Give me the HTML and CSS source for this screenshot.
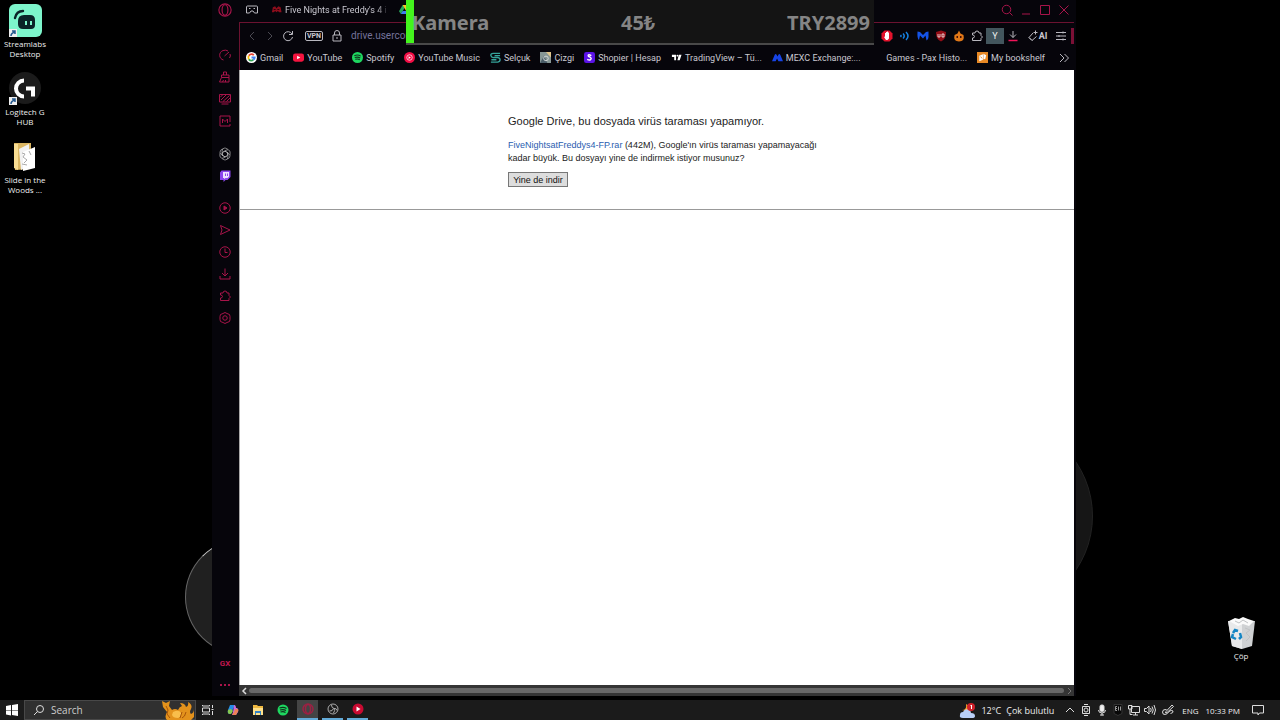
FILE: index.html
```html
<!DOCTYPE html>
<html lang="tr">
<head>
    <meta charset="UTF-8">
    <meta name="viewport" content="width=device-width, initial-scale=1.0">
    <title>Google Drive</title>
    <link rel="stylesheet" href="styles.css">
</head>
<body>
    <div class="desktop">
        <div class="planet planetLeft"></div>
        <div class="planet planetRight"></div>

        <div class="shortcuts">
            <a class="shortcut" href="#">
                <svg width="36" height="36" viewBox="0 0 36 36"><rect x="2" y="1" width="33" height="33" rx="6" fill="#7df5cb"/><path d="M8 15c1-5 4-7 8-7" fill="none" stroke="#0b2328" stroke-width="2.4" stroke-linecap="round"/><path d="M17 12h6q5 0 5 5v5q0 4-4 4h-8q-5 0-5-5v-3q0-6 6-6z" fill="#0b2328"/><path d="M19 18v4M24 18v4" stroke="#7df5cb" stroke-width="2"/><rect x="2" y="26" width="8" height="8" fill="#eee"/><path d="M4 33q0-3 4-4M5 28h3v3" fill="none" stroke="#24598f" stroke-width="1.500"/></svg>
                <span>Streamlabs Desktop</span>
            </a>
            <a class="shortcut" href="#">
                <svg width="36" height="36" viewBox="0 0 36 36"><circle cx="18" cy="17" r="16" fill="#1b1b1b"/><path d="M17 9.500a8 8 0 0 0 0 16" fill="none" stroke="#fff" stroke-width="4"/><path d="M19 17.500h7v8" fill="none" stroke="#fff" stroke-width="4"/><rect x="2" y="26" width="8" height="8" fill="#eee"/><path d="M4 33q0-3 4-4M5 28h3v3" fill="none" stroke="#24598f" stroke-width="1.500"/></svg>
                <span>Logitech G HUB</span>
            </a>
            <a class="shortcut" href="#">
                <svg width="36" height="36" viewBox="0 0 36 36"><path d="M7 4h17v26l-16 1z" fill="#dcb763"/><path d="M7 5h4v26l-4-2z" fill="#f9dd92"/><path d="M12 10l10-5v22l-8 4z" fill="#f2f2f2"/><path d="M16 13l12-5v21l-12 3z" fill="#fff"/><path d="M15 14l3 1-2 3 4 3-3 3M22 12l2 4M15 25l5 1" fill="none" stroke="#aaa"/></svg>
                <span>Slide in the Woods ...</span>
            </a>
        </div>

        <a class="shortcut recycleBin" href="#">
            <svg width="36" height="36" viewBox="0 0 36 36"><path d="M5 6h27l-3 25-10 3-10-3z" fill="#cfd1d3"/><path d="M5 6l14 3v25l-10-3z" fill="#e8e9ea"/><path d="M6 6l6-3 4 1 4-2 5 2 6 2-5 5-6-2-5 2z" fill="#fafafa"/><path d="M12 6l4 2 4-3 5 3M22 13l5 2-4 3 4 4-4 4" fill="none" stroke="#c0c2c4"/><path d="M10 18l2-3 3 1M17 18l1 4-2 2M13 24l-4-2 1-3" fill="none" stroke="#1686c4" stroke-width="2.500"/></svg>
            <span>Çöp</span>
        </a>

        <div class="window">
            <nav class="sidebar">
                <button class="sideButton logo" aria-label="Opera GX"><svg class="icon big" viewBox="0 0 24 24"><circle cx="12" cy="12" r="10.500"/><ellipse cx="12" cy="12" rx="5" ry="9"/></svg></button>
                <div class="sideGroup first">
                    <button class="sideButton" aria-label="Speed"><svg class="icon" viewBox="0 0 24 24"><path d="M9 22C0 20-2 7 8 3q6-2 10 1M22 10q2 4-1 8M11 14l9-8"/></svg></button>
                    <button class="sideButton" aria-label="Cleaner"><svg class="icon" viewBox="0 0 24 24"><path d="M9 8V2h6v6M5 8h15v5H5zM5 13L1 22h19v-9M7 22l2-4M13 22v-4"/></svg></button>
                    <button class="sideButton" aria-label="Mods"><svg class="icon" viewBox="0 0 24 24"><path d="M1 3h22v15H1zM5 22h14M4 14L14 4M8 17L21 5M15 17l7-7M3 8l4-4"/></svg></button>
                    <button class="sideButton" aria-label="Player"><svg class="icon" viewBox="0 0 24 24"><path d="M22 14V2H2v20h20v-4M7 16V8l5 5 5-5v8"/></svg></button>
                </div>
                <div class="sideGroup apps">
                    <button class="sideButton" aria-label="ChatGPT"><svg class="icon big knot" viewBox="0 0 24 24"><path d="M12 7l5 3v7q-1 6-6 5l-4-2M16.300 9.500v5l-6 4q-6 2-7-3v-5M16 15l-4 2-6-4q-5-4-1-8l4-2M12 17l-5-3V7q1-6 6-5l4 2M7.700 14.500v-5l6-4q6-2 7 3v5M8 9l4-2 6 4q5 4 1 8l-4 2"/></svg></button>
                    <button class="sideButton" aria-label="Twitch"><svg class="icon" viewBox="0 0 24 24"><path d="M5 1h18v13l-6 6h-4l-4 4v-4H2V5z" fill="#8a45ed" stroke="none"/><path d="M8 4h12v9l-3 3h-4l-3 2v-2H8z" fill="#eee3ff" stroke="none"/><path d="M13 7v5M17 7v5" stroke="#8a45ed"/></svg></button>
                </div>
                <div class="sideGroup">
                    <button class="sideButton" aria-label="Video"><svg class="icon" viewBox="0 0 24 24"><circle cx="12" cy="12" r="10.500"/><path d="M10 8l6 4-6 4z" fill="#a8144a"/></svg></button>
                    <button class="sideButton" aria-label="Flow"><svg class="icon" viewBox="0 0 24 24"><path d="M3 3l19 9-19 9 3-9z"/></svg></button>
                    <button class="sideButton" aria-label="History"><svg class="icon" viewBox="0 0 24 24"><circle cx="12" cy="12" r="10.500"/><path d="M12 5v8h5"/></svg></button>
                    <button class="sideButton" aria-label="Downloads"><svg class="icon" viewBox="0 0 24 24"><path d="M12 1v15M6 10l6 6 6-6M2 16v6h20v-6"/></svg></button>
                    <button class="sideButton" aria-label="Extensions"><svg class="icon" viewBox="0 0 24 24"><path d="M3 6h5q0-4 4-4t4 4h4v5l3 3-3 3v4H3v-5q4 0 4-3t-4-3z"/></svg></button>
                    <button class="sideButton" aria-label="Settings"><svg class="icon" viewBox="0 0 24 24"><path d="M12 1l4 2 5 2 1 4v6l-1 4-5 2-4 2-4-2-5-2-1-4V9l1-4 5-2z"/><circle cx="12" cy="12" r="4.500"/></svg></button>
                </div>
                <div class="sideGroup last">
                    <button class="sideButton gx">GX</button>
                    <button class="sideButton" aria-label="More"><svg class="icon" viewBox="0 0 24 24"><path d="M2 12h4M10 12h4M18 12h4" stroke-width="4"/></svg></button>
                </div>
            </nav>

            <div class="browser">
                <div class="tabBar">
                    <button class="tool" aria-label="Islands"><svg class="icon grey" viewBox="0 0 24 24"><path d="M3 4h18q2 0 2 2v12h-6l-3-4h-4l-3 4H1V6q0-2 2-2zM6 9h3M15 9h3"/></svg></button>
                    <div class="tab">
                        <svg class="favicon" viewBox="0 0 24 24"><path d="M2 18L4 7l5-2 3 4 4-4 5 2 2 11h-5l-3-3-3 3-3-3-3 3z" fill="#8c0d1c"/><path d="M6 12h4M14 12h4" stroke="#1c0508" stroke-width="2"/></svg>
                        <span class="tabTitle">Five Nights at Freddy's 4 i</span>
                    </div>
                    <div class="tab">
                        <svg class="favicon" viewBox="0 0 24 24"><path d="M8 2h8L8 16l-4 6-4-6z" fill="#26a65b"/><path d="M16 2l8 14h-8L8 2z" fill="#f6c026"/><path d="M8 15h16l-4 7H4z" fill="#3d7ff0"/></svg>
                    </div>
                    <div class="windowButtons">
                        <button class="tool" aria-label="Search tabs"><svg class="icon" viewBox="0 0 24 24"><circle cx="11" cy="11" r="8.500"/><path d="M17 17l6 6"/></svg></button>
                        <button class="tool" aria-label="Minimize"><svg class="icon" viewBox="0 0 24 24"><path d="M4 20h16"/></svg></button>
                        <button class="tool" aria-label="Maximize"><svg class="icon" viewBox="0 0 24 24"><path d="M3 3h18v18H3z"/></svg></button>
                        <button class="tool" aria-label="Close"><svg class="icon" viewBox="0 0 24 24"><path d="M3 3l18 18M21 3L3 21"/></svg></button>
                    </div>
                </div>

                <div class="toolBar">
                    <button class="tool" aria-label="Back"><svg class="icon dark" viewBox="0 0 24 24"><path d="M16 4l-8 8 8 8"/></svg></button>
                    <button class="tool" aria-label="Forward"><svg class="icon dark" viewBox="0 0 24 24"><path d="M8 4l8 8-8 8"/></svg></button>
                    <button class="tool" aria-label="Reload"><svg class="icon grey" viewBox="0 0 24 24"><path d="M20 8a9 9 0 1 0 1 6M21 2v7h-7"/></svg></button>
                    <button class="vpn">VPN</button>
                    <svg class="icon grey" viewBox="0 0 24 24"><path d="M4 10h16v12H4zM7 10V6q0-5 5-5t5 5v4M12 14v4"/></svg>
                    <input class="address" type="text" aria-label="Address" value="drive.usercontent.google.com/download">
                    <div class="extensions">
                        <button class="tool" aria-label="Adblock"><svg class="icon fill" viewBox="0 0 24 24"><path d="M7 1h10l6 6v10l-6 6H7l-6-6V7z" fill="#e3132c"/><path d="M8 6h2v-2h2V3h2v2h2v12l-3 3h-3l-4-6 2-1z" fill="#fff"/></svg></button>
                        <button class="tool" aria-label="Sound"><svg class="icon" viewBox="0 0 24 24"><path d="M3 10q2 2 0 4M8 7q5 5 0 10M14 4q8 8 0 16" stroke="#1684e5" stroke-width="3"/></svg></button>
                        <button class="tool" aria-label="Malwarebytes"><svg class="icon fill" viewBox="0 0 24 24"><path d="M1 3l5 1 6 6 6-6 5-1v11q0 5-4 7l-2-10-5 6-6-6-2 9Q0 17 1 3z" fill="#1554e8"/></svg></button>
                        <button class="tool" aria-label="uBlock"><svg class="icon" viewBox="0 0 24 24"><path d="M12 1l10 3q1 14-10 19Q1 18 2 4z" fill="#920d16" stroke="none"/><path d="M6 8v6h4V8M14 8h4v6h-4z" stroke="#fff" stroke-width="1.500"/></svg></button>
                        <button class="tool" aria-label="Fire"><svg class="icon fill" viewBox="0 0 24 24"><path d="M12 1l3 6 6 3q3 13-9 13T3 10l6-3z" fill="#e17818"/><path d="M7 12h3v4H7zM14 12h3v4h-3z" fill="#431005"/></svg></button>
                        <button class="tool" aria-label="All extensions"><svg class="icon grey" viewBox="0 0 24 24"><path d="M3 6h5q0-4 4-4t4 4h4v5l3 3-3 3v4H3v-5q4 0 4-3t-4-3z"/></svg></button>
                        <button class="tool profile">Y</button>
                        <button class="tool" aria-label="Downloads"><svg class="icon" viewBox="0 0 24 24"><path d="M12 2v13M6 9l6 6 6-6" stroke="#b9b8bf"/><path d="M3 21h18" stroke="#f01459" stroke-width="3"/></svg></button>
                        <button class="ai"><svg class="icon grey" viewBox="0 0 24 24"><path d="M12 6L4 15l6 6 9-8M4 15l6 6M17 1v8M13 5h8"/></svg>AI</button>
                        <button class="tool" aria-label="Easy setup"><svg class="icon grey" viewBox="0 0 24 24"><path d="M2 5h20M2 12h20M2 19h20M16 3v4M8 10v4M16 17v4"/></svg></button>
                    </div>
                    <div class="accent"></div>
                </div>

                <nav class="bookmarks">
                    <a href="#"><svg class="favicon" viewBox="0 0 24 24"><circle cx="12" cy="12" r="12" fill="#fff"/><g fill="none" stroke-width="4"><path d="M6 8q6-6 11-1" stroke="#ea4335"/><path d="M6 8q-2 4 0 8" stroke="#fbbc05"/><path d="M6 16q5 5 10 1" stroke="#34a853"/><path d="M12 12h7q0 3-3 5" stroke="#4285f4"/></g></svg>Gmail</a>
                    <a href="#"><svg class="favicon" viewBox="0 0 24 24"><rect y="3" width="24" height="18" rx="5" fill="#f5143f"/><path d="M9 8l7 4-7 4z" fill="#fff"/></svg>YouTube</a>
                    <a href="#"><svg class="favicon" viewBox="0 0 24 24"><circle cx="12" cy="12" r="12" fill="#1ed760"/><path d="M5 8q8-3 14 1M6 12q7-2 12 1M7 16q6-2 10 1" fill="none" stroke="#10321c" stroke-width="2.300"/></svg>Spotify</a>
                    <a href="#"><svg class="favicon" viewBox="0 0 24 24"><circle cx="12" cy="12" r="12" fill="#f20d45"/><circle cx="12" cy="12" r="6" fill="none" stroke="#fff" stroke-width="1.500"/><path d="M10 9l5 3-5 3z" fill="#fff"/></svg>YouTube Music</a>
                    <a href="#"><svg class="favicon" viewBox="0 0 24 24"><path d="M22 3H7Q1 3 2 8t7 4h8q5 1 5 5t-5 5H2M22 8H10M3 17h11" fill="none" stroke="#35a39a" stroke-width="3"/></svg>Selçuk</a>
                    <a href="#"><svg class="favicon" viewBox="0 0 24 24"><path d="M0 0h24v24H0z" fill="#879795"/><path d="M13 0h11v12z" fill="#e0c68c"/><path d="M0 24L9 8l7 16z" fill="#495c67"/><circle cx="13" cy="14" r="5" fill="none" stroke="#d9dddc" stroke-width="2"/></svg>Çizgi</a>
                    <a href="#"><svg class="favicon" viewBox="0 0 24 24"><rect width="24" height="24" rx="5" fill="#5b13e8"/><path d="M16 8q-7-4-7 0 0 2 4 3 5 3 1 6-3 1-7-1" fill="none" stroke="#fff" stroke-width="3"/></svg>Shopier | Hesap</a>
                    <a href="#"><svg class="favicon" viewBox="0 0 24 24"><path d="M2 6h9v12H7v-7H2zM17 6h6l-4 12h-5z" fill="#fff"/><circle cx="14" cy="8" r="2" fill="#fff"/></svg>TradingView – Tü...</a>
                    <a href="#"><svg class="favicon" viewBox="0 0 24 24"><path d="M0 20L6 6q2-3 4 0l2 4 2-4q2-3 4 0l6 14H14l-3-6-3 6z" fill="#1744e6"/></svg>MEXC Exchange:...</a>
                    <a class="noIcon" href="#">Games - Pax Histo...</a>
                    <a href="#"><svg class="favicon" viewBox="0 0 24 24"><path d="M0 0h24v24H0z" fill="#e88925"/><path d="M5 8l8-3v12l-8 3zM14 4l6 3-2 8-4 1z" fill="#fff"/><path d="M8 10l3 4" stroke="#e88925" stroke-width="2"/></svg>My bookshelf</a>
                    <button class="tool more" aria-label="More bookmarks"><svg class="icon grey" viewBox="0 0 24 24"><path d="M4 4l8 8-8 8M13 4l8 8-8 8"/></svg></button>
                </nav>

                <main class="page">
                    <div class="warning">
                        <h1>Google Drive, bu dosyada virüs taraması yapamıyor.</h1>
                        <p><a href="#">FiveNightsatFreddys4-FP.rar</a> (442M), Google'ın virüs taraması yapamayacağı<br>kadar büyük. Bu dosyayı yine de indirmek istiyor musunuz?</p>
                        <button class="download">Yine de indir</button>
                    </div>
                    <hr>
                </main>

                <div class="scrollBar">
                    <svg width="8" height="8" viewBox="0 0 8 8"><path d="M6 1L3 4l3 3" fill="none" stroke="#ddd" stroke-width="1.500"/></svg>
                    <div class="thumb"></div>
                    <svg width="8" height="8" viewBox="0 0 8 8"><path d="M3 1l3 3-3 3" fill="none" stroke="#777"/></svg>
                </div>
            </div>
        </div>

        <div class="donation">
            <span>Kamera</span>
            <span>45₺</span>
            <span>TRY2899</span>
        </div>
    </div>

    <footer class="taskbar">
        <button class="task start" aria-label="Start"><svg width="12" height="12" viewBox="0 0 12 12"><path d="M0 2l5-1v5H0zM6 1l6-1v6H6zM0 6.500h5v5l-5-1zM6 6.500h6V12l-6-1z" fill="#fff"/></svg></button>
        <div class="search">
            <svg width="12" height="12" viewBox="0 0 12 12"><circle cx="7" cy="5" r="3.500" fill="none" stroke="#ddd"/><path d="M4.500 7.500L1 11" stroke="#ddd"/></svg>
            <input type="text" aria-label="Search" placeholder="Search">
            <svg width="32" height="20" viewBox="0 0 32 20"><path d="M0 1l4 2 4-2-1 5 3 4q3-2 6 0 1-3 4-4l-2-3q5 0 6 4 3-1 2-5 5 3 3 7-2 3 0 5 3-1 3-5 3 6-1 9l-2 2H5q-3-3 0-8L1 7z" fill="#e3921c"/><path d="M11 12q6-3 8 1 1 4-3 5-5 0-6-3z" fill="#f9be4b"/><path d="M4 6l2 4-1 4 3 4M20 12l-2 6M24 12q-1 5-4 6" fill="none" stroke="#a65208"/></svg>
        </div>
        <div class="tasks">
            <button class="task" aria-label="Task view"><svg width="12" height="12" viewBox="0 0 12 12"><path d="M.5 1v1h7V1M.5 4h7v4h-7zM.5 11v-1h7v1M10.500 1v3M10.500 7v4M9.500 5.500h2" fill="none" stroke="#ddd"/></svg></button>
            <button class="task" aria-label="Copilot"><svg width="12" height="12" viewBox="0 0 12 12"><path d="M3 1h5L6 5 4 10H3Q0 10 1 6z" fill="#258de8"/><path d="M1 6l3-1 2 2-2 3H3Q0 10 1 6z" fill="#85c84f"/><path d="M7 1q2 0 2 3h1q2 1 1 4l-2 3H5l1-3z" fill="#c86be0"/><path d="M8 5h3q1 2-1 4l-1 2H5l2-3z" fill="#ef8255"/></svg></button>
            <button class="task" aria-label="Explorer"><svg width="12" height="12" viewBox="0 0 12 12"><path d="M1 1h4l1 1h5v9H1z" fill="#efb840"/><path d="M1 4h10v7H1z" fill="#ffe08a"/><path d="M3 7h6v4H8V9H4v2H3z" fill="#3482c4"/></svg></button>
            <button class="task" aria-label="Spotify"><svg width="12" height="12" viewBox="0 0 24 24"><circle cx="12" cy="12" r="11" fill="#1ed760"/><path d="M5 8q8-3 14 1M6 12q7-2 12 1M7 16q6-2 10 1" fill="none" stroke="#10321c" stroke-width="2.300"/></svg></button>
            <button class="task open active" aria-label="Opera GX"><svg width="12" height="12" viewBox="0 0 24 24" fill="none" stroke="#9c2143" stroke-width="3"><circle cx="12" cy="12" r="10"/><ellipse cx="12" cy="12" rx="5" ry="9"/></svg></button>
            <button class="task open" aria-label="OBS"><svg width="12" height="12" viewBox="0 0 24 24" fill="none" stroke="#aaa" stroke-width="2"><circle cx="12" cy="12" r="10"/><path d="M9 4q0 6 5 7 5-1 6 4M13 11q-2 6-8 5M14 11q3 4-1 9"/></svg></button>
            <button class="task open" aria-label="YouTube Music"><svg width="12" height="12" viewBox="0 0 24 24"><circle cx="12" cy="12" r="11" fill="#c90a31"/><path d="M9 7l8 5-8 5z" fill="#fff"/></svg></button>
        </div>
        <div class="tray">
            <button class="weather"><svg width="17" height="17" viewBox="0 0 17 17"><path d="M3 8q5 0 4-6 6 3 4 8z" fill="#f4a52d"/><path d="M4 16q-4 0-3-3 0-3 3-3 2-4 6-2 2 1 2 3 4 0 4 3 0 2-3 2z" fill="#b9cff7"/><circle cx="12" cy="5" r="4" fill="#cf2029"/><path d="M11.500 4l1-1v4" fill="none" stroke="#fff"/></svg><span>12°C</span><span>Çok bulutlu</span></button>
            <button class="trayIcon" aria-label="Hidden icons"><svg class="icon pale" viewBox="0 0 24 24"><path d="M4 16l8-8 8 8"/></svg></button>
            <button class="trayIcon" aria-label="Camera"><svg class="icon pale" viewBox="0 0 24 24"><path d="M5 5h14v14H5zM8 1h8M8 23h8"/><circle cx="12" cy="12" r="4"/></svg></button>
            <button class="trayIcon" aria-label="Microphone"><svg class="icon pale" viewBox="0 0 24 24"><rect x="8" y="2" width="8" height="13" rx="3" fill="#eee"/><path d="M5 12q0 6 7 6t7-6M12 18v5M8 22h8"/></svg></button>
            <button class="trayIcon" aria-label="Epic Games"><svg class="icon" viewBox="0 0 24 24"><path d="M4 1h16v18l-8 4-8-4z" fill="#080808" stroke="#333"/><path d="M7 5v8M7 5h3M7 9h3M7 13h3M13 5v8M17 5v8" stroke="#999"/></svg></button>
            <button class="trayIcon" aria-label="Network"><svg class="icon pale" viewBox="0 0 24 24"><path d="M7 5h16v12H7zM10 22h10M15 17v5M1 3h7v7H1zM4 10v11h5"/></svg></button>
            <button class="trayIcon" aria-label="Volume"><svg class="icon pale" viewBox="0 0 24 24"><path d="M1 9h4l5-5v16l-5-5H1zM13 8q3 4 0 8M16 5q5 7 0 14M20 2q6 10 0 20"/></svg></button>
            <button class="trayIcon pen" aria-label="Pen"><svg class="icon pale" viewBox="0 0 24 24"><path d="M8 15L20 2l3 3-13 12-3 1zM9 11q-8-1-8 5 0 6 6 5 5-2 7-6 5-4 8-1 1 4-5 5"/></svg></button>
            <span class="language">ENG</span>
            <span class="clock">10:33 PM</span>
            <button class="trayIcon notice" aria-label="Notifications"><svg class="icon pale" viewBox="0 0 24 24"><path d="M1 3h22v15h-8l-3 4v-4H1z"/></svg></button>
        </div>
    </footer>
</body>
</html>
```
FILE: styles.css
```css
*{
    box-sizing: border-box;
}
html, body{
    height: 100%;
    margin: 0;
}
body{
    display: flex;
    flex-direction: column;
    background-color: black;
    color: #c9c8d0;
    font-family: Roboto, sans-serif;
    font-size: 9px;
    overflow: hidden;
}
button{
    display: flex;
    align-items: center;
    justify-content: center;
    padding: 0;
    border: 0;
    background: none;
    color: inherit;
    font: inherit;
}
a{
    color: inherit;
    text-decoration: none;
}
input{
    min-width: 0;
    padding: 0;
    border: 0;
    background: none;
    color: inherit;
    font: inherit;
    outline: none;
}
svg{
    flex: none;
}
.icon{
    width: 12px;
    height: 12px;
    fill: none;
    stroke: #a8144a;
    stroke-width: 2;
}
.icon.big{
    width: 14px;
    height: 14px;
}
.icon.grey{
    stroke: #b9b8bf;
}
.icon.dark{
    stroke: #4b4a52;
}
.icon.pale{
    stroke: #dddddd;
}
.icon.knot{
    stroke: #d8d8d8;
    stroke-width: 1;
}
.icon.fill{
    stroke: none;
}
.favicon{
    width: 11px;
    height: 11px;
}

/* desktop */
.desktop{
    position: relative;
    flex: 1;
    min-height: 0;
    overflow: hidden;
}
.planet{
    position: absolute;
    border-radius: 50%;
}
.planetLeft{
    left: 185px;
    bottom: 45px;
    width: 116px;
    height: 116px;
    border: 1px solid #666666;
    border-top-color: #cccccc;
    background-color: #202020;
}
.planetRight{
    right: 187px;
    bottom: 87px;
    width: 194px;
    height: 194px;
    border: 1px solid #222222;
    background-color: #161616;
}
.shortcuts{
    display: flex;
    flex-direction: column;
    gap: 8px;
    width: 50px;
    padding-top: 3px;
}
.shortcut{
    display: flex;
    flex-direction: column;
    align-items: center;
    height: 60px;
    color: #eeeeee;
    font-family: "Open Sans", sans-serif;
    font-size: 8px;
    line-height: 10px;
    text-align: center;
}
.recycleBin{
    position: absolute;
    right: 14px;
    bottom: 25px;
    width: 50px;
}

/* browser window */
.window{
    position: absolute;
    left: 212px;
    right: 204px;
    top: 0;
    bottom: 4px;
    display: flex;
    background-color: #06050b;
}
.sidebar{
    display: flex;
    flex-direction: column;
    width: 27px;
    color: #c2184f;
}
.sideButton{
    width: 26px;
    height: 22px;
}
.sideButton.logo{
    height: 20px;
}
.sideGroup{
    margin-bottom: 11px;
}
.sideGroup.first{
    margin-top: 24px;
}
.sideGroup.apps{
    margin-bottom: 10px;
}
.sideGroup.last{
    margin-top: auto;
    margin-bottom: 0;
}
.gx{
    font-size: 8px;
    font-weight: bold;
}
.browser{
    display: flex;
    flex-direction: column;
    flex: 1;
    min-width: 0;
    padding-right: 2px;
}
.tool{
    width: 18px;
    height: 18px;
}
.tabBar{
    display: flex;
    align-items: center;
    height: 22px;
    padding: 0 1px 3px 4px;
    gap: 10px;
}
.tab{
    display: flex;
    align-items: center;
    gap: 3px;
}
.tabTitle{
    width: 104px;
    white-space: nowrap;
    mask-image: linear-gradient(to right, black 88%, transparent 100%);
}
.windowButtons{
    display: flex;
    gap: 1px;
    margin-left: auto;
}
.toolBar{
    display: flex;
    align-items: center;
    height: 26px;
    padding-left: 3px;
    border-top: 1px solid #6b1230;
    border-left: 1px solid #6b1230;
}
.vpn{
    width: 18px;
    height: 10px;
    margin: 0 8px;
    border: 1px solid #b9b8bf;
    border-radius: 2px;
    font-size: 7px;
    font-weight: bold;
}
.address{
    flex: 1;
    margin-left: 8px;
    color: #75739b;
    font-size: 10px;
}
.extensions{
    display: flex;
    align-items: center;
}
.profile{
    height: 16px;
    background-color: #43565d;
    color: #eeeeee;
}
.ai{
    width: 30px;
    height: 18px;
    font-weight: bold;
}
.accent{
    width: 3px;
    height: 16px;
    margin-left: 1px;
    background-color: #7b1035;
}
.bookmarks{
    display: flex;
    align-items: center;
    height: 22px;
    padding: 0 1px 3px 6px;
    gap: 10px;
    border-left: 1px solid #6b1230;
    white-space: nowrap;
}
.bookmarks a{
    display: flex;
    align-items: center;
    gap: 3px;
    height: 16px;
}
.bookmarks .noIcon{
    margin-left: auto;
}

/* drive page */
.page{
    flex: 1;
    background-color: white;
    border-left: 1px solid #aaaaaa;
    color: #222222;
    font-family: "Liberation Sans", Arial, sans-serif;
}
.warning{
    width: 300px;
    margin: 0 auto;
    padding: 44px 0 22px 1px;
    white-space: nowrap;
}
.warning h1{
    margin: 0 0 11px;
    font-size: 11px;
    font-weight: normal;
    line-height: 14px;
}
.warning p{
    margin: 0 0 7px;
    line-height: 13px;
}
.warning a{
    color: #2a5db0;
}
.download{
    width: 60px;
    height: 15px;
    border: 1px solid #777777;
    background-color: #dddddd;
    color: #111111;
}
.page hr{
    margin: 0;
    border: 0;
    border-top: 1px solid #999999;
}
.scrollBar{
    display: flex;
    align-items: center;
    gap: 1px;
    height: 11px;
    padding: 0 1px;
    background-color: #353535;
}
.thumb{
    flex: 1;
    height: 5px;
    border-radius: 3px;
    background-color: #686868;
}

/* stream overlay */
.donation{
    position: absolute;
    top: 0;
    left: 406px;
    right: 406px;
    height: 45px;
    display: flex;
    align-items: center;
    justify-content: space-between;
    padding: 2px 4px 0 6px;
    border-bottom: 2px solid #494949;
    background: linear-gradient(to right, #44f51d 8px, #141414 8px);
    color: #858585;
    font-family: "Noto Sans", sans-serif;
    font-size: 20px;
    font-weight: bold;
}

/* taskbar */
.taskbar{
    display: flex;
    height: 20px;
    background-color: #1b1b1b;
    color: #eeeeee;
    font-family: "Open Sans", sans-serif;
}
.task{
    width: 21px;
    height: 20px;
}
.start{
    width: 24px;
}
.search{
    display: flex;
    align-items: center;
    width: 172px;
    padding: 0 1px 0 8px;
    gap: 6px;
    border: 1px solid #484848;
    background-color: #303030;
    font-size: 10px;
}
.search input{
    flex: 1;
}
.search input::placeholder{
    color: #cccccc;
    opacity: 1;
}
.tasks{
    display: flex;
    gap: 4px;
    margin-left: 1px;
}
.open{
    border-bottom: 2px solid #63abd9;
}
.active{
    background-color: #444444;
}
.tray{
    display: flex;
    align-items: center;
    margin-left: auto;
    padding-right: 13px;
    font-size: 8px;
}
.weather{
    gap: 5px;
    margin-right: 8px;
    font-size: 9px;
}
.trayIcon{
    width: 16px;
    height: 20px;
}
.pen{
    width: 20px;
}
.language{
    margin: 0 7px 0 4px;
}
.clock{
    margin-right: 9px;
}
.notice{
    width: 18px;
}
```
